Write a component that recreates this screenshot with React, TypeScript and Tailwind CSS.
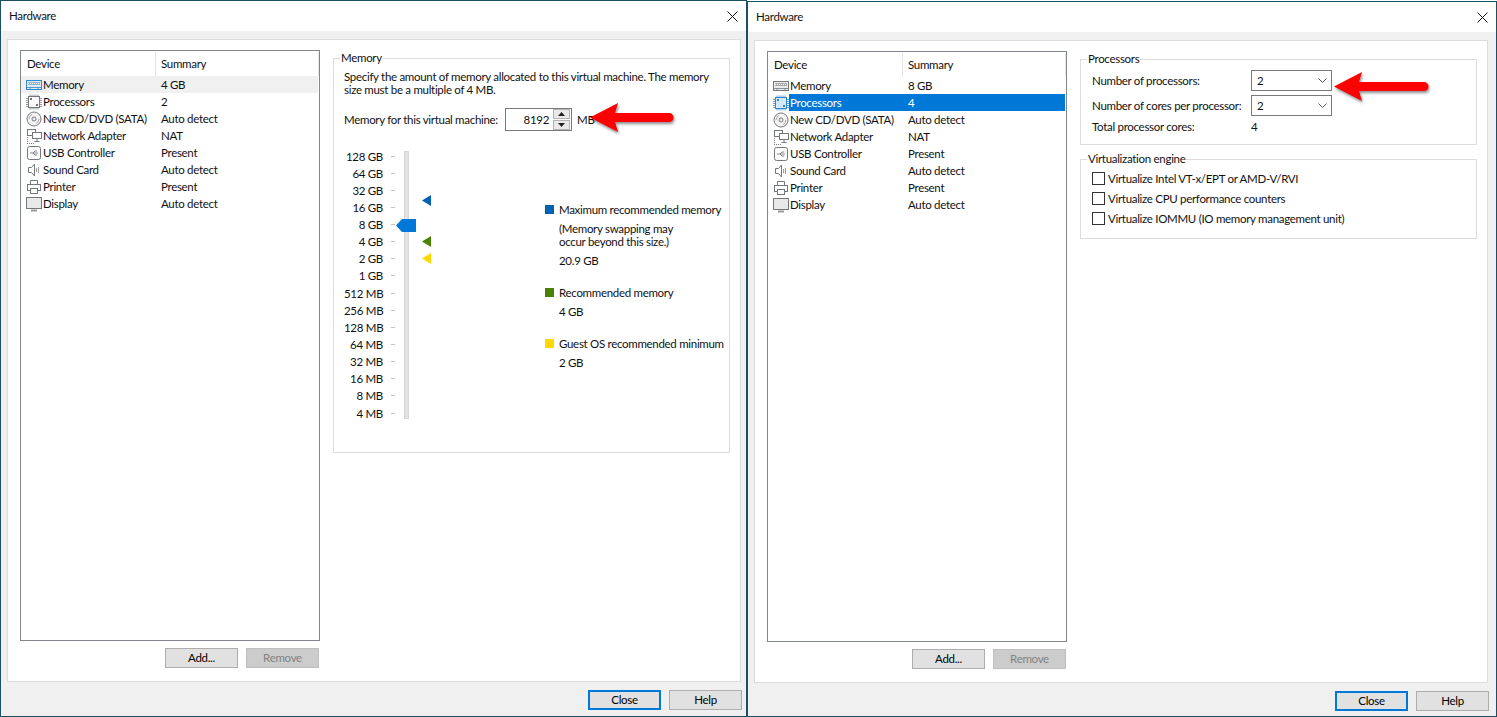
import React from "react";

function Ico({ name, active }: { name: string; active?: boolean }) {
  const c = active ? "#2f86c9" : "#74787c";
  const common = { width: 18, height: 16, viewBox: "0 0 18 16", fill: "none", stroke: c, strokeWidth: 1 };
  switch (name) {
    case "mem":
      return (
        <svg {...common}>
          <rect x="1.5" y="3.5" width="15" height="9" fill={active ? "#dfeaf3" : "#ececec"} />
          <rect x="3" y="5" width="12" height="3" fill={active ? "#8fb4d2" : "#a8a8a8"} stroke="none" />
          <path d="M3 6.5h12" stroke="#fff" strokeDasharray="1 1" />
          <path d="M1.5 10.5h15M5 12.5v-2M13 12.5v-2" strokeWidth="0.8" />
        </svg>
      );
    case "cpu":
      return (
        <svg {...common}>
          <rect x="3.5" y="2.5" width="11" height="11" fill={active ? "#d3e9fa" : "#fafafa"} />
          <path d="M5 .5v2M7 .5v2M9 .5v2M11 .5v2M13 .5v2M5 13.5v2M7 13.5v2M9 13.5v2M11 13.5v2M13 13.5v2M1 4.5h2M1 6.5h2M1 8.5h2M1 10.5h2M1 12.5h2M15 4.5h2M15 6.5h2M15 8.5h2M15 10.5h2M15 12.5h2" opacity=".75" />
          <rect x="5" y="4" width="2" height="2" fill={c} stroke="none" />
          <rect x="11" y="10" width="2" height="2" fill={c} stroke="none" />
        </svg>
      );
    case "cd":
      return (
        <svg {...common}>
          <circle cx="9" cy="8" r="7" fill="#f3f3f3" />
          <circle cx="9" cy="8" r="2" />
          <path d="M4 8a5 5 0 0 1 3-4.5M14 8a5 5 0 0 1-3 4.5" stroke="#a8a8a8" />
        </svg>
      );
    case "net":
      return (
        <svg {...common}>
          <rect x="2.5" y="1.5" width="8" height="6" fill="#fff" />
          <rect x="7.5" y="4.5" width="9" height="6" fill="#fff" />
          <path d="M12 10.5v3M9.5 13.5h5" />
          <path d="M2 15.5h7M2.5 9v6" strokeDasharray="1 1" />
        </svg>
      );
    case "usb":
      return (
        <svg {...common}>
          <rect x="2.5" y="1.5" width="13" height="13" rx="2" fill="#fbfbfb" />
          <path d="M5 8h8M8 8l2-2h2M8 8l2 2h2" stroke="#8a8a8a" />
        </svg>
      );
    case "snd":
      return (
        <svg {...common}>
          <path d="M3.5 5.5h3l3-3.5v12l-3-3.5h-3z" fill="#fff" />
          <path d="M11.5 6v4M13.5 5v6" stroke="#a0a0a0" />
        </svg>
      );
    case "prn":
      return (
        <svg {...common}>
          <path d="M5.5 5V1.5h7V5" />
          <rect x="2.5" y="5.5" width="13" height="6" fill="#fff" />
          <rect x="5.5" y="9.5" width="7" height="5" fill="#fff" />
        </svg>
      );
    default:
      return (
        <svg {...common}>
          <rect x="1.5" y="1.5" width="15" height="11" fill="#e9e9e9" />
          <path d="M6 14.5h6" strokeWidth="2" stroke="#9a9a9a" />
        </svg>
      );
  }
}

function Btn({ children, kind }: { children: React.ReactNode; kind?: "off" | "main" }) {
  const cls =
    kind === "off"
      ? "bg-[#cccccc] border border-[#bfbfbf] text-[#838383]"
      : kind === "main"
        ? "bg-[#e1e1e1] border-2 border-[#0078d7] text-black"
        : "bg-[#e1e1e1] border border-[#adadad] text-black";
  return <div className={`w-[73px] h-[20px] flex items-center justify-center ${cls}`}>{children}</div>;
}

function DeviceList({ rows, sel }: { rows: [string, string, string][]; sel: number }) {
  return (
    <div className="w-[300px]">
      <div className="h-[591px] border border-[#82878f] bg-white">
        <div className="flex h-[25px] w-[298px] items-center">
          <div className="w-[135px] h-[24px] flex items-center pl-[6px] pt-[1px] border-r border-[#e5e5e5]">Device</div>
          <div className="flex-1 h-[24px] flex items-center pl-[5px] pt-[1px] border-r border-[#e5e5e5]">Summary</div>
        </div>
        {rows.map(([icon, name, value], i) => {
          const hover = sel === -1 && i === 0;
          const on = i === sel;
          return (
            <div key={name} className={`flex h-[17px] w-[297px] items-center ${hover ? "bg-[#f0f0f0]" : ""}`}>
              <div className="w-[21px] h-[16px] pl-[4px] shrink-0">
                <Ico name={icon} active={on || hover} />
              </div>
              <div className={`flex flex-1 h-[17px] items-center pl-[1px] pt-[1px] ${on ? "bg-[#0078d7] text-white" : ""}`}>
                <div className="w-[118px]">{name}</div>
                <div>{value}</div>
              </div>
            </div>
          );
        })}
      </div>
      <div className="flex justify-end gap-2 mt-[7px] pr-[1px]">
        <Btn>Add...</Btn>
        <Btn kind="off">Remove</Btn>
      </div>
    </div>
  );
}

function Window({ width, children, title, top }: { width: string; children: React.ReactNode; title: string; top: string }) {
  return (
    <div className={`${width} ${top} shrink-0 flex flex-col border border-[#1c4f66] bg-[#f0f0f0]`}>
      <div className="h-[30px] bg-white flex items-center justify-between pl-2 pr-[8px] shrink-0">
        <span>{title}</span>
        <svg width="11" height="11" viewBox="0 0 11 11" stroke="#111" strokeWidth="1">
          <path d="M.5.5l10 10M10.5.5l-10 10" />
        </svg>
      </div>
      <div className="pl-[6px] pt-2">
        <div className="w-[734px] h-[643px] bg-white border border-[#dcdcdc] flex gap-[13px] pl-3 pt-[10px]">{children}</div>
        <div className="w-[735px] flex justify-end gap-2 mt-2">
          <Btn kind="main">Close</Btn>
          <Btn>Help</Btn>
        </div>
      </div>
    </div>
  );
}

const GB = ["128 GB", "64 GB", "32 GB", "16 GB", "8 GB", "4 GB", "2 GB", "1 GB", "512 MB", "256 MB", "128 MB", "64 MB", "32 MB", "16 MB", "8 MB", "4 MB"];

function Tri({ cls, color }: { cls: string; color: string }) {
  return (
    <svg className={`absolute left-[17px] ${cls}`} width="9" height="11" viewBox="0 0 9 11">
      <path d="M0 5.5L9 0v11z" fill={color} />
    </svg>
  );
}

function Spin() {
  return (
    <div className="w-[17px] h-[21px] flex flex-col gap-[1px] mr-[1px]">
      <div className="h-[10px] bg-[#e9e9e9] border border-[#b4b4b4] flex items-center justify-center">
        <svg width="7" height="4" viewBox="0 0 7 4"><path d="M3.5 0L7 4H0z" fill="#222" /></svg>
      </div>
      <div className="h-[10px] bg-[#e9e9e9] border border-[#b4b4b4] flex items-center justify-center">
        <svg width="7" height="4" viewBox="0 0 7 4"><path d="M3.5 4L7 0H0z" fill="#222" /></svg>
      </div>
    </div>
  );
}

function MemoryGroup() {
  return (
    <fieldset className="w-[397px] h-[403px] border border-[#dcdcdc] pl-[10px]">
      <legend className="ml-[-4px] px-[1px] h-[16px] leading-[15px]">Memory</legend>
      <div className="leading-[13px] mt-[4px]">
        Specify the amount of memory allocated to this virtual machine. The memory
        <br />
        size must be a multiple of 4 MB.
      </div>
      <div className="flex items-center mt-[12px] h-[23px]">
        <div className="w-[161px]">Memory for this virtual machine:</div>
        <div className="w-[67px] h-[23px] border border-[#7a7a7a] flex items-center justify-end">
          <span className="mr-[4px]">8192</span>
          <Spin />
        </div>
        <span className="ml-[5px]">MB</span>
      </div>
      <div className="flex mt-[17px]">
        <div className="flex w-[201px]">
          <div className="w-[39px] text-right">
            {GB.map((g, i) => (
              <div key={g} className={`leading-[17px] ${i === 8 || i === 15 ? "h-[17px] mt-[1px]" : "h-[17px]"}`}>{g}</div>
            ))}
          </div>
          <div className="ml-2 w-[4px]">
            {GB.map((g, i) => (
              <div key={g} className={`flex items-center ${i === 8 || i === 15 ? "h-[17px] mt-[1px]" : "h-[17px]"}`}>
                <div className="w-[4px] h-[1px] bg-[#c4c4c4]" />
              </div>
            ))}
          </div>
          <div className="relative ml-[9px] mt-[3px] w-[5px] h-[268px] bg-[#e2e2e2] border border-[#d6d6d6]">
            <svg className="absolute left-[-9px] top-[67px]" width="20" height="13" viewBox="0 0 20 13">
              <path d="M0 6.5L6 0h14v13H6z" fill="#0078d7" />
            </svg>
            <Tri cls="top-[43px]" color="#0063b1" />
            <Tri cls="top-[84px]" color="#498205" />
            <Tri cls="top-[101px]" color="#ffd800" />
          </div>
        </div>
        <div className="mt-[55px] leading-[13px]">
          <div className="flex items-center gap-[5px]">
            <div className="w-[9px] h-[9px] bg-[#0063b1]" />
            <span>Maximum recommended memory</span>
          </div>
          <div className="ml-[14px] mt-[6px]">
            (Memory swapping may
            <br />
            occur beyond this size.)
          </div>
          <div className="ml-[14px] mt-[6px]">20.9 GB</div>
          <div className="flex items-center gap-[5px] mt-[19px]">
            <div className="w-[9px] h-[9px] bg-[#498205]" />
            <span>Recommended memory</span>
          </div>
          <div className="ml-[14px] mt-[6px]">4 GB</div>
          <div className="flex items-center gap-[5px] mt-[19px]">
            <div className="w-[9px] h-[9px] bg-[#ffd800]" />
            <span>Guest OS recommended minimum</span>
          </div>
          <div className="ml-[14px] mt-[6px]">2 GB</div>
        </div>
      </div>
    </fieldset>
  );
}

function Combo() {
  return (
    <div className="w-[81px] h-[21px] border border-[#7a7a7a] flex items-center justify-between pl-[5px] pr-[4px]">
      <span>2</span>
      <svg width="9" height="5" viewBox="0 0 9 5" fill="none" stroke="#555" strokeWidth="1">
        <path d="M.5.5l4 4 4-4" />
      </svg>
    </div>
  );
}

function Check({ label }: { label: string }) {
  return (
    <div className="flex items-center gap-[3px] h-[13px]">
      <div className="w-[13px] h-[13px] border border-[#333] bg-white" />
      <span>{label}</span>
    </div>
  );
}

function ProcessorGroups() {
  return (
    <div className="w-[397px]">
      <fieldset className="h-[94px] border border-[#dcdcdc] pl-[11px]">
        <legend className="ml-[-5px] px-[1px] h-[16px] leading-[15px]">Processors</legend>
        <div className="flex items-center mt-[3px]">
          <div className="w-[159px]">Number of processors:</div>
          <Combo />
        </div>
        <div className="flex items-center mt-[4px]">
          <div className="w-[159px]">Number of cores per processor:</div>
          <Combo />
        </div>
        <div className="flex items-center mt-[2px]">
          <div className="w-[159px]">Total processor cores:</div>
          <span>4</span>
        </div>
      </fieldset>
      <fieldset className="h-[88px] mt-[6px] border border-[#dcdcdc] pl-[11px]">
        <legend className="ml-[-5px] px-[1px] h-[16px] leading-[15px]">Virtualization engine</legend>
        <div className="flex flex-col gap-[7px] mt-[5px]">
          <Check label="Virtualize Intel VT-x/EPT or AMD-V/RVI" />
          <Check label="Virtualize CPU performance counters" />
          <Check label="Virtualize IOMMU (IO memory management unit)" />
        </div>
      </fieldset>
    </div>
  );
}

function Arrow({ cls, d, w }: { cls: string; d: string; w: number }) {
  return (
    <svg className={`absolute ${cls}`} width={w} height="36" viewBox={`0 0 ${w} 36`} style={{ filter: "drop-shadow(1px 2px 1.5px rgba(0,0,0,.45))" }}>
      <path d={d} fill="#fe0000" />
    </svg>
  );
}

const mk = (a: string, b: string): [string, string, string][] => [
  ["mem", "Memory", a],
  ["cpu", "Processors", b],
  ["cd", "New CD/DVD (SATA)", "Auto detect"],
  ["net", "Network Adapter", "NAT"],
  ["usb", "USB Controller", "Present"],
  ["snd", "Sound Card", "Auto detect"],
  ["prn", "Printer", "Present"],
  ["dsp", "Display", "Auto detect"],
];

export default function App() {
  return (
    <div className="relative w-[1497px] h-[717px] flex overflow-hidden bg-white text-[11.5px] tracking-[-0.3px] text-[#111] font-['Lato',sans-serif] whitespace-nowrap">
      <Window width="w-[747px]" top="h-[717px]" title="Hardware">
        <DeviceList rows={mk("4 GB", "2")} sel={-1} />
        <MemoryGroup />
      </Window>
      <Window width="w-[750px]" top="h-[716px] mt-[1px]" title="Hardware">
        <DeviceList rows={mk("8 GB", "4")} sel={1} />
        <ProcessorGroups />
      </Window>
      <Arrow cls="left-[589px] top-[102px]" w={92} d="M1 15.5L29 1l-3 10h54a4.5 4.5 0 0 1 0 9H26l3 10z" />
      <Arrow cls="left-[1333px] top-[71px]" w={100} d="M1 15.5L29 1l-3 10h65a4.5 4.5 0 0 1 0 9H26l3 10z" />
    </div>
  );
}
